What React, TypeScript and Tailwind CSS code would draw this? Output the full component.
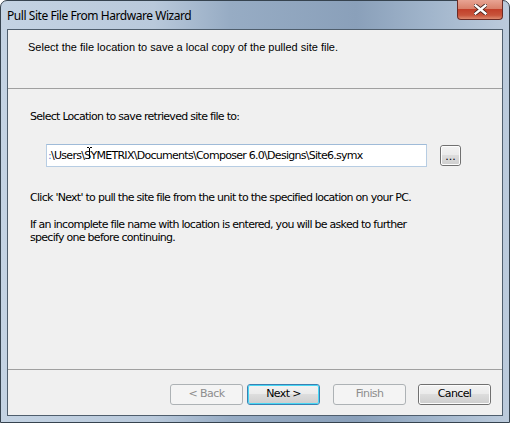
import React from "react";

const tahoma = { fontFamily: "'DejaVu Sans', 'Liberation Sans', sans-serif" };

function WinButton({
  label,
  disabled,
  isDefault,
  className = "",
}: {
  label: string;
  disabled?: boolean;
  isDefault?: boolean;
  className?: string;
}) {
  if (disabled) {
    return (
      <div
        className={`flex h-[21px] w-[73px] items-center justify-center rounded-[3px] border border-[#adb2b5] bg-[#f4f4f4] text-[11px] tracking-[-0.6px] text-[#8d8d8d] ${className}`}
        style={tahoma}
      >
        {label}
      </div>
    );
  }
  return (
    <div
      className={`flex h-[21px] w-[73px] rounded-[3px] border ${
        isDefault ? "border-[#3c7fb1]" : "border-[#707070]"
      } ${className}`}
    >
      <div
        className={`flex flex-1 items-center justify-center rounded-[2px] border ${
          isDefault ? "border-[#48d7f4]" : "border-[#fcfcfc]"
        } bg-[linear-gradient(#f2f2f2_0%,#ebebeb_45%,#dddddd_50%,#cfcfcf_100%)] text-[11px] tracking-[-0.6px] text-black`}
        style={tahoma}
      >
        {label}
      </div>
    </div>
  );
}

export default function App() {
  return (
    <div className="h-[423px] w-[510px] bg-white">
      <div className="flex h-[423px] w-[510px] flex-col rounded-t-[7px] border border-[#36434f] bg-[linear-gradient(90deg,#c4d3e3_0%,#b9c9db_30%,#97acc4_45%,#8aa0ba_70%,#a2b6cc_85%,#bccbdc_100%)] px-[6px] pb-[6px]">
        {/* title bar */}
        <div className="relative flex h-[28px] items-center">
          <span
            className="pt-[1px] text-[12px] tracking-[-0.45px] text-black"
            style={{ fontFamily: "'Noto Sans', 'Open Sans', sans-serif" }}
          >
            Pull Site File From Hardware Wizard
          </span>
          <div className="absolute right-[0px] top-[-1px] flex h-[20px] w-[46px] items-center justify-center rounded-b-[4px] border border-t-0 border-[#6b2b25] bg-[linear-gradient(#e8a493_0%,#d9816b_45%,#c2402a_50%,#c8543b_80%,#dd8a6f_100%)]">
            <svg width="13" height="11" viewBox="0 0 13 11">
              <path
                d="M1.5 1.5 L11.5 9.5 M11.5 1.5 L1.5 9.5"
                stroke="#3d1d18"
                strokeWidth="4"
                strokeLinecap="square"
              />
              <path
                d="M1.5 1.5 L11.5 9.5 M11.5 1.5 L1.5 9.5"
                stroke="#ffffff"
                strokeWidth="2.4"
                strokeLinecap="square"
              />
            </svg>
          </div>
        </div>

        {/* client area */}
        <div className="flex flex-1 flex-col border border-[#4f5e6d] bg-[#f0f0f0]">
          <div className="h-[58px] pl-[20px] pt-[11px]">
            <p
              className="text-[11px] leading-[13px] text-black"
              style={{ fontFamily: "'Liberation Sans', Arial, sans-serif" }}
            >
              Select the file location to save a local copy of the pulled site file.
            </p>
          </div>
          <div className="h-px bg-[#a0a0a0]" />

          <div className="flex flex-1 flex-col pl-[22px] text-[11px] leading-[13px] text-black" style={tahoma}>
            <p className="mt-[21px] tracking-[-0.72px]">Select Location to save retrieved site file to:</p>

            <div className="mt-[21px] flex items-start pl-[16px]">
              <div className="relative flex h-[23px] w-[381px] items-center overflow-hidden border border-[#b7cde3] border-t-[#9fbbd8] bg-white pl-[1px]">
                <span className="whitespace-nowrap tracking-[-0.72px]">
                  <span className="text-[#4d8ad8]">:</span>\Users\SYMETRIX\Documents\Composer 6.0\Designs\Site6.symx
                </span>
                {/* mouse I-beam */}
                <svg className="absolute left-[39px] top-[2px]" width="7" height="12" viewBox="0 0 7 12">
                  <path d="M1 0.5 H3 M4 0.5 H6 M3.5 1 V11" stroke="#000" strokeWidth="1" fill="none" />
                </svg>
              </div>
              <div className="ml-[13px] mt-[1px] flex h-[21px] w-[21px] rounded-[3px] border border-[#707070]">
                <div className="flex flex-1 items-end justify-center rounded-[2px] border border-[#fcfcfc] bg-[linear-gradient(#f2f2f2_0%,#ebebeb_45%,#dddddd_50%,#cfcfcf_100%)] pb-[2px] text-[11px] leading-[11px]">
                  ...
                </div>
              </div>
            </div>

            <p className="mt-[24px] tracking-[-0.72px]">
              Click 'Next' to pull the site file from the unit to the specified location on your PC.
            </p>
            <p className="mt-[14px] tracking-[-0.72px]">
              If an incomplete file name with location is entered, you will be asked to further
              <br />
              specify one before continuing.
            </p>
          </div>

          <div className="h-px bg-[#a0a0a0]" />
          <div className="flex h-[45px] items-start justify-end pr-[11px] pt-[14px]">
            <WinButton label="< Back" disabled />
            <WinButton label="Next >" isDefault className="ml-[4px]" />
            <WinButton label="Finish" disabled className="ml-[13px]" />
            <WinButton label="Cancel" className="ml-[12px]" />
          </div>
        </div>
      </div>
    </div>
  );
}
